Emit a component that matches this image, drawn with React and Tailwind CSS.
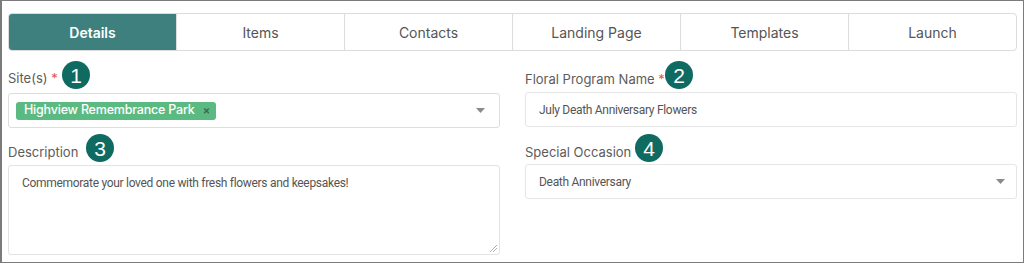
import React from "react";

const tabs = ["Details", "Items", "Contacts", "Landing Page", "Templates", "Launch"];

function Badge({ n, className }) {
  return (
    <div
      className={`absolute flex h-[28px] w-[28px] items-center justify-center rounded-full bg-[#0f6a62] text-[21px] leading-none text-white ${className}`}
      style={{ fontFamily: "'Liberation Sans', Arial, sans-serif" }}
    >
      {n}
    </div>
  );
}

function Caret({ className }) {
  return (
    <svg width="9" height="5" viewBox="0 0 9 5" className={className}>
      <path d="M0 0 L9 0 L4.5 5 Z" fill="#8a8a8a" />
    </svg>
  );
}

const poppins = { fontFamily: "Inter, 'Noto Sans', sans-serif" };
const roboto = { fontFamily: "Roboto, 'Liberation Sans', Arial, sans-serif" };

export default function App() {
  return (
    <div className="h-[263px] w-[1024px] overflow-hidden border border-l-2 border-[#7b7b7b] bg-white" style={poppins}>
      <div className="px-[6px] pt-[12px]">
        <div className="flex h-[38px] w-[1009px] rounded-[4px] border border-[#dcdcdc]">
          {tabs.map((t, i) => (
            <div
              key={t}
              className={`flex flex-1 items-center justify-center text-[14px] ${
                i === 0
                  ? "rounded-l-[3px] bg-[#3e807d] font-semibold text-white"
                  : "text-[#555555]"
              } ${i < tabs.length - 1 ? "border-r border-[#dcdcdc]" : ""}`}
            >
              {t}
            </div>
          ))}
        </div>

        <div className="flex gap-[25px]">
          {/* Left column */}
          <div className="flex w-[492px] flex-col">
            <div className="relative mt-[17px] h-[20px] text-[13px] leading-[20px] text-[#5c5c5c]">
              Site(s) <span className="text-[#e25550]">*</span>
              <Badge n="1" className="left-[54px] top-[-7px]" />
            </div>
            <div className="mt-[5px] flex h-[35px] items-center justify-between rounded-[3px] border border-[#dedede] pl-[7px] pr-[14px]">
              <div className="flex h-[18px] w-[200px] items-center justify-between rounded-[3px] bg-[#5bba81] pl-[8px] pr-[6px] text-[12.5px] font-medium tracking-[-0.2px] text-white">
                <span>Highview Remembrance Park</span>
                <span className="text-[11px] font-bold text-[#3f6b52]">×</span>
              </div>
              <Caret />
            </div>
            <div className="relative mt-[14px] h-[20px] text-[13px] leading-[20px] text-[#5c5c5c]">
              Description
              <Badge n="3" className="left-[78px] top-[-8px]" />
            </div>
            <div className="relative mt-[3px] h-[90px] rounded-[3px] border border-[#e3e3e3] px-[13px] pt-[8px] text-[12px] tracking-[-0.3px] text-[#555555]" style={roboto}>
              Commemorate your loved one with fresh flowers and keepsakes!
              <svg width="7" height="7" viewBox="0 0 7 7" className="absolute bottom-[2px] right-[2px]">
                <path d="M0 7 L7 0 M3 7 L7 3" stroke="#9a9a9a" strokeWidth="0.8" />
              </svg>
            </div>
          </div>

          {/* Right column */}
          <div className="flex w-[492px] flex-col">
            <div className="relative mt-[18px] h-[20px] text-[13px] leading-[20px] text-[#5c5c5c]">
              Floral Program Name <span className="text-[#e25550]">*</span>
              <Badge n="2" className="left-[140px] top-[-8px]" />
            </div>
            <div className="mt-[3px] flex h-[35px] items-center rounded-[3px] border border-[#e6e6e6] px-[13px] text-[12px] tracking-[-0.3px] text-[#555555]" style={roboto}>
              July Death Anniversary Flowers
            </div>
            <div className="relative mt-[15px] h-[20px] text-[13px] leading-[20px] text-[#5c5c5c]">
              Special Occasion
              <Badge n="4" className="left-[110px] top-[-8px]" />
            </div>
            <div className="mt-[2px] flex h-[35px] items-center justify-between rounded-[3px] border border-[#e6e6e6] pl-[13px] pr-[11px] text-[12px] tracking-[-0.3px] text-[#555555]" style={roboto}>
              <span>Death Anniversary</span>
              <Caret />
            </div>
          </div>
        </div>
      </div>
    </div>
  );
}
